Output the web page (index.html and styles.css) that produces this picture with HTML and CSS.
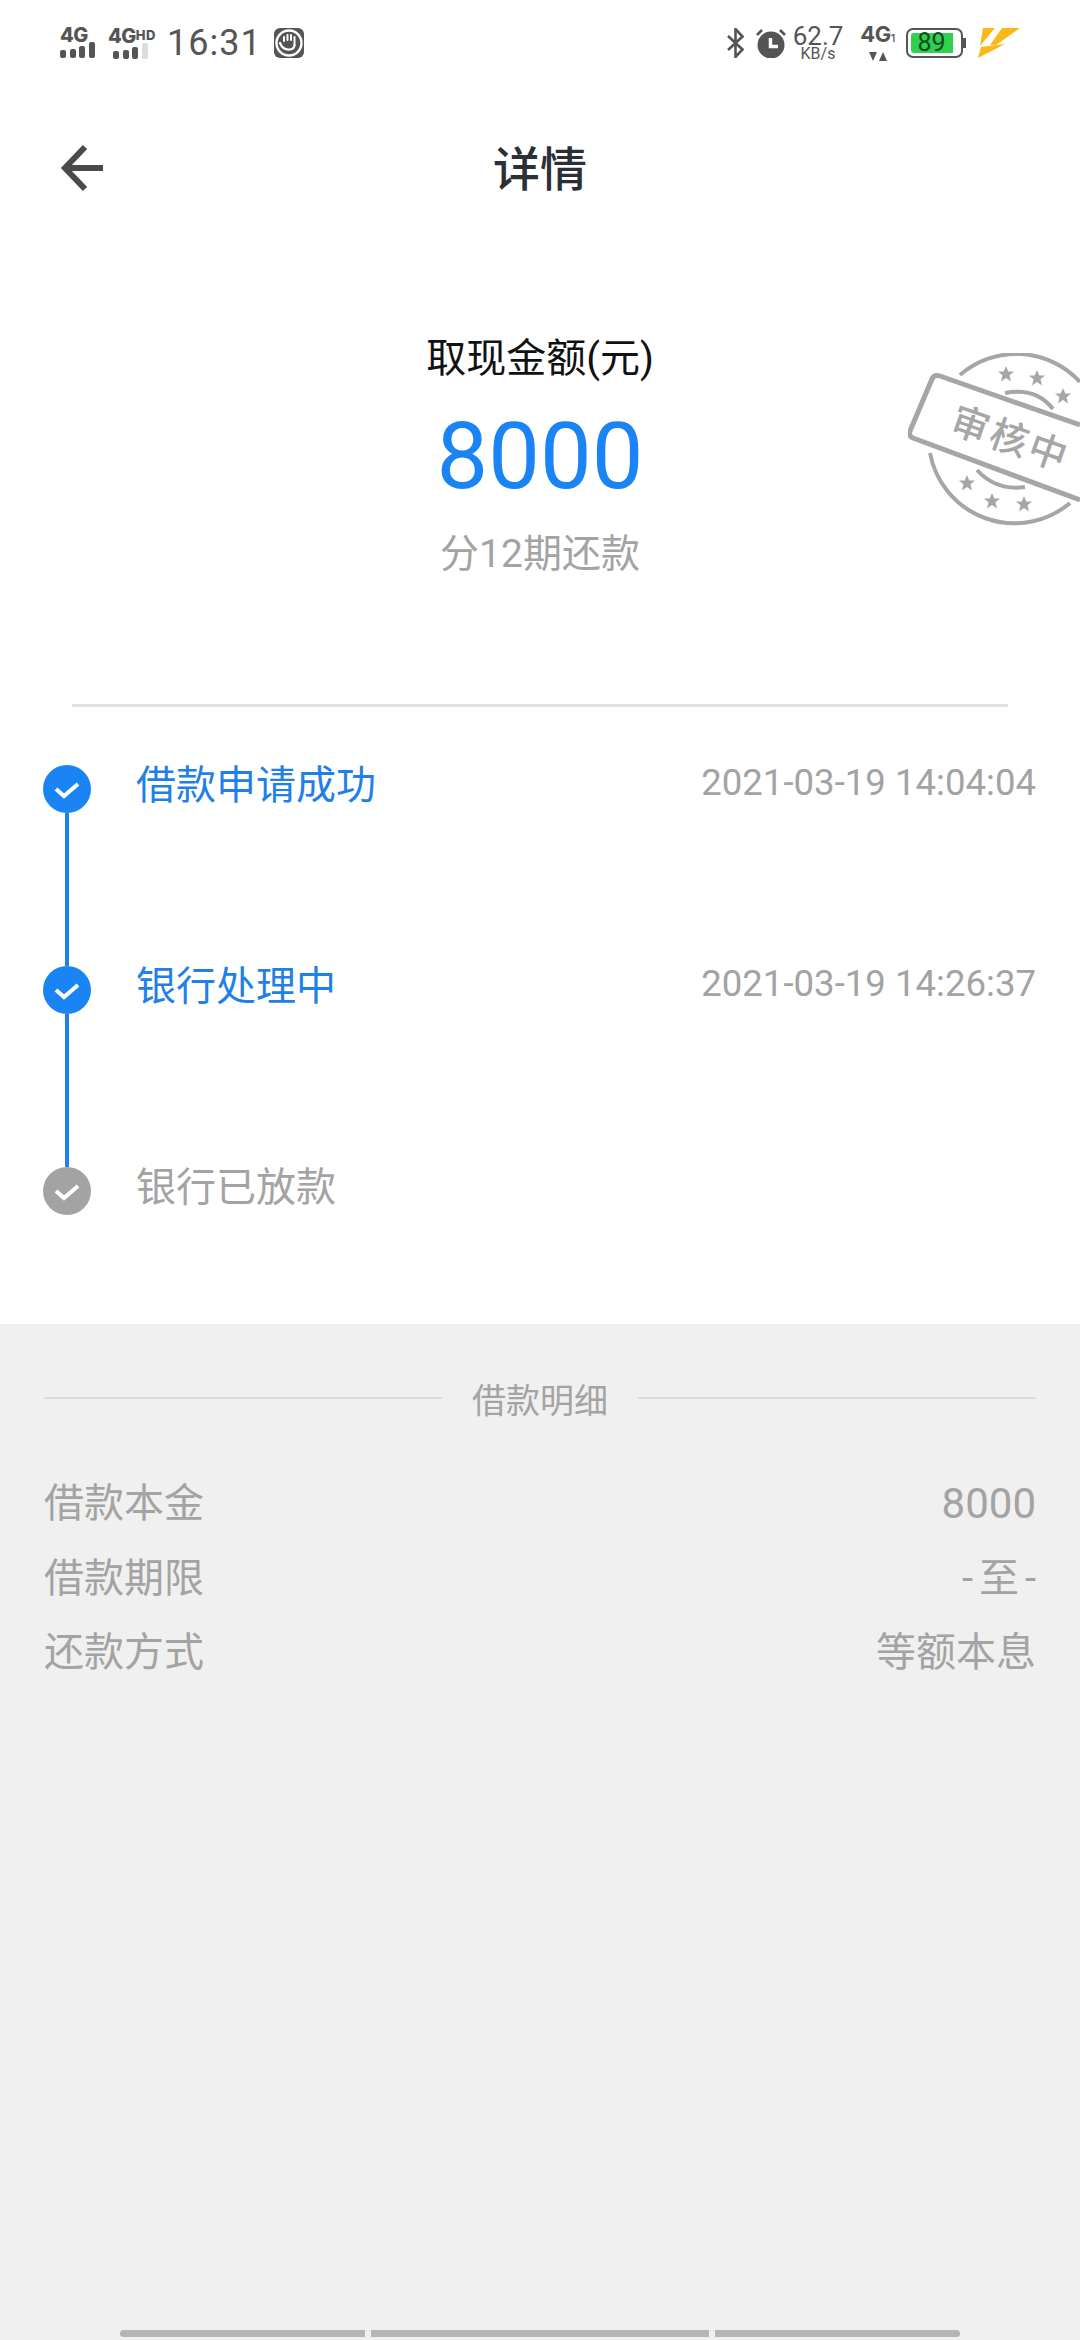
FILE: index.html
```html
<!DOCTYPE html>
<html lang="zh-CN">
<head>
  <meta charset="UTF-8" />
  <meta name="viewport" content="width=device-width, initial-scale=1.0"/>
  <title>详情</title>
  <link rel="stylesheet" href="styles.css">
</head>
<body>

<div class="status-bar">
  <div class="status-left">
    <div class="net">
      <span class="net-label">4G</span>
      <div class="bars">
        <i class="b1"></i><i class="b2"></i><i class="b3"></i><i class="b4"></i>
      </div>
    </div>
    <div class="net net-hd">
      <span class="net-label">4G<small>HD</small></span>
      <div class="bars">
        <i class="b1"></i><i class="b2"></i><i class="b3"></i><i class="b4 off"></i>
      </div>
    </div>
    <span class="clock">16:31</span>
    <svg class="hand-icon" width="30" height="30" viewBox="0 0 30 30">
      <rect width="30" height="30" rx="6" fill="#555"/>
      <circle cx="15" cy="15" r="12.500" fill="none" stroke="#fff" stroke-width="2.400"/>
      <path d="M10 13V9M13.500 12V7M17 12V7M20.500 13V9M20.500 12v5" fill="none" stroke="#fff" stroke-width="2" stroke-linecap="round"/>
      <path d="M6 15c2 5 6 7 10 6.500 3-.5 4.500-2.500 4.500-4.500" fill="none" stroke="#fff" stroke-width="2.200" stroke-linecap="round"/>
    </svg>
  </div>
  <div class="status-right">
    <svg width="18" height="30" viewBox="0 0 18 30">
      <path d="M2 8l14.500 13.500-7 7.500V1l7 7.500L2 22" fill="none" stroke="#555" stroke-width="2.600"/>
    </svg>
    <svg class="alarm" width="30" height="30" viewBox="0 0 30 30">
      <circle cx="15" cy="17" r="13.500" fill="#555"/>
      <path d="M1 7l5-5M29 7l-5-5" stroke="#555" stroke-width="2.600"/>
      <path d="M14.500 10v8.500H22" fill="none" stroke="#fff" stroke-width="3.500"/>
    </svg>
    <div class="speed">
      <span class="speed-num">62.7</span>
      <span class="speed-unit">KB/s</span>
    </div>
    <div class="sim">
      <span class="sim-label">4G<small>1</small></span>
      <svg width="18" height="9" viewBox="0 0 18 9">
        <path d="M0 0h8L4 9zM10 9l4-9 4 9z" fill="#555"/>
      </svg>
    </div>
    <div class="battery">
      <div class="battery-body"><span class="battery-level">89</span></div>
      <div class="battery-tip"></div>
    </div>
    <svg class="bolt" width="42" height="30" viewBox="0 0 42 30">
      <path d="M5 0h12L2 18zM24 0h18L18 17h-6zM3 19l24-3L0 30z" fill="#fbb917"/>
    </svg>
  </div>
</div>

<div class="top-bar">
  <svg class="back" width="46" height="48" viewBox="0 0 46 48">
    <path d="M43 24H5M25 3L5 24l20 21" fill="none" stroke="#4a4a4a" stroke-width="6"/>
  </svg>
  <h1 class="page-title">详情</h1>
</div>

<div class="amount-box">
  <div class="amount-label">取现金额(元)</div>
  <div class="amount-num">8000</div>
  <div class="amount-sub">分12期还款</div>
  <svg class="stamp" width="172" height="180" viewBox="0 0 172 180">
    <defs>
      <polygon id="star" points="0,-8 2.300,-2.500 8,-2.500 3.500,1.200 5,7.500 0,4 -5,7.500 -3.500,1.200 -8,-2.500 -2.300,-2.500"/>
    </defs>
    <g fill="none" stroke="#a6a6a6" stroke-width="4">
      <path d="M52 22A86 86 0 0 1 172 29"/>
      <path d="M22 100A86 86 0 0 0 162 150"/>
      <path d="M97 40Q128 34 145 56"/>
      <path d="M69 117Q88 138 117 134"/>
      <path d="M172 72L32 23Q26 21 24 26L2 78Q0 83 5 85L172 147" stroke-width="5"/>
    </g>
    <g fill="#a6a6a6">
      <use href="#star" x="98" y="21"/>
      <use href="#star" x="129" y="25"/>
      <use href="#star" x="155" y="43"/>
      <use href="#star" x="59" y="130"/>
      <use href="#star" x="84" y="148"/>
      <use href="#star" x="116" y="151"/>
      <text x="40" y="78" class="stamp-text" transform="rotate(19.400 40 78)">审核中</text>
    </g>
  </svg>
</div>

<div class="divider"></div>

<div class="steps">
  <div class="step">
    <div class="step-mark">
      <svg class="tick" width="48" height="48" viewBox="0 0 48 48">
        <circle cx="24" cy="24" r="24" fill="#1a84f5"/>
        <path d="M13 24l8 7 14-12" fill="none" stroke="#fff" stroke-width="4"/>
      </svg>
      <div class="step-line"></div>
    </div>
    <div class="step-name">借款申请成功</div>
    <div class="step-time">2021-03-19 14:04:04</div>
  </div>
  <div class="step">
    <div class="step-mark">
      <svg class="tick" width="48" height="48" viewBox="0 0 48 48">
        <circle cx="24" cy="24" r="24" fill="#1a84f5"/>
        <path d="M13 24l8 7 14-12" fill="none" stroke="#fff" stroke-width="4"/>
      </svg>
      <div class="step-line"></div>
    </div>
    <div class="step-name">银行处理中</div>
    <div class="step-time">2021-03-19 14:26:37</div>
  </div>
  <div class="step step-last">
    <div class="step-mark">
      <svg class="tick" width="48" height="48" viewBox="0 0 48 48">
        <circle cx="24" cy="24" r="24" fill="#a3a3a3"/>
        <path d="M13 24l8 7 14-12" fill="none" stroke="#fff" stroke-width="4"/>
      </svg>
    </div>
    <div class="step-name step-todo">银行已放款</div>
  </div>
</div>

<div class="detail">
  <div class="detail-head">
    <div class="detail-rule"></div>
    <span class="detail-title">借款明细</span>
    <div class="detail-rule"></div>
  </div>
  <div class="detail-row"><span>借款本金</span><span class="num-val">8000</span></div>
  <div class="detail-row"><span>借款期限</span><span class="dash-val">-至-</span></div>
  <div class="detail-row"><span>还款方式</span><span>等额本息</span></div>

  <div class="nav-hint">
    <i class="seg-a"></i><i class="seg-b"></i><i class="seg-c"></i>
  </div>
</div>

</body>
</html>
```

FILE: styles.css
```css
* {
  box-sizing: border-box;
}
html, body {
  height: 100%;
}
body {
  margin: 0;
  width: 1080px;
  height: 2340px;
  overflow: hidden;
  display: flex;
  flex-direction: column;
  background: white;
  font-family: Roboto, "Noto Sans CJK SC", sans-serif;
  color: #333;
}

/* status bar */
.status-bar {
  height: 84px;
  padding: 2px 60px 0;
  display: flex;
  justify-content: space-between;
  align-items: center;
  color: #555;
  flex-shrink: 0;
}
.status-left, .status-right {
  display: flex;
  align-items: center;
}
.net {
  width: 48px;
  display: flex;
  flex-direction: column;
  height: 30px;
}
.net-hd {
  width: 59px;
}
.net-label {
  font-family: Inter, sans-serif;
  font-size: 20px;
  font-weight: 800;
  line-height: 14px;
  letter-spacing: -0.5px;
}
.net-label small {
  font-size: 13px;
  font-weight: 800;
  vertical-align: 3px;
  letter-spacing: 0.5px;
}
.bars {
  display: flex;
  align-items: flex-end;
  gap: 3.5px;
  height: 16px;
}
.bars i {
  width: 6px;
  background: #555;
  border-radius: 2px;
}
.net-hd .bars {
  padding-left: 5px;
}
.b1 { height: 8px; }
.b2 { height: 9px; }
.b3 { height: 12px; }
.b4 { height: 16px; }
.bars .off {
  background: #ddd;
}
.clock {
  font-size: 36px;
  line-height: 30px;
  margin-right: 12px;
  letter-spacing: 1px;
}
.status-right .alarm {
  margin: 0 7px 0 12px;
}
.speed {
  width: 50px;
  margin-right: 18px;
  display: flex;
  flex-direction: column;
  align-items: center;
}
.speed-num {
  font-size: 26px;
  line-height: 20px;
}
.speed-unit {
  font-size: 16px;
  line-height: 15px;
}
.sim {
  width: 33px;
  margin-right: 12px;
  display: flex;
  flex-direction: column;
  align-items: center;
  gap: 5px;
}
.sim-label {
  font-family: Inter, sans-serif;
  font-size: 22px;
  font-weight: 700;
  line-height: 17px;
  letter-spacing: -0.5px;
}
.sim-label small {
  font-size: 11px;
  font-weight: 500;
}
.battery {
  display: flex;
  align-items: center;
  margin-right: 12px;
}
.battery-body {
  width: 57px;
  height: 30px;
  border: 2.500px solid #555;
  border-radius: 7px;
  padding: 2.500px 0 2.500px 2.500px;
}
.battery-level {
  display: block;
  width: 42px;
  height: 20px;
  background: #2fd14f;
  border-radius: 3px 0 0 3px;
  font-size: 25px;
  line-height: 20px;
  text-align: center;
  color: #124a22;
}
.battery-tip {
  width: 3px;
  height: 10px;
  background: #555;
}

/* header */
.top-bar {
  height: 172px;
  padding: 0 0 4px 60px;
  position: relative;
  display: flex;
  align-items: center;
  flex-shrink: 0;
}
.page-title {
  position: absolute;
  left: 0;
  right: 0;
  margin: -6px 0 0;
  text-align: center;
  font-size: 47px;
  font-weight: 500;
  color: #2b2f36;
}

/* amount */
.amount-box {
  height: 448px;
  padding-top: 75px;
  position: relative;
  display: flex;
  flex-direction: column;
  align-items: center;
  flex-shrink: 0;
}
.amount-label {
  font-size: 40px;
  line-height: 56px;
  color: #111;
}
.amount-num {
  font-size: 92px;
  line-height: 108px;
  color: #1a84f5;
  margin-top: 16px;
}
.amount-sub {
  font-size: 39px;
  line-height: 56px;
  color: #a3a3a3;
  margin-top: 15px;
}
.stamp {
  position: absolute;
  right: 0;
  top: 97px;
}
.stamp-text {
  font-size: 38px;
  font-weight: 500;
  font-family: "Noto Sans CJK SC", sans-serif;
  letter-spacing: 3px;
}

.divider {
  height: 3px;
  margin: 0 72px;
  background: #e2e2e2;
  flex-shrink: 0;
}

/* steps */
.steps {
  padding: 58px 44px 0 43px;
  flex-shrink: 0;
}
.step {
  height: 201px;
  display: flex;
  align-items: flex-start;
}
.step-last {
  height: 157px;
}
.step-mark {
  width: 48px;
  height: 100%;
  margin-right: 45px;
  display: flex;
  flex-direction: column;
  align-items: center;
}
.tick {
  flex-shrink: 0;
}
.step-line {
  flex: 1;
  width: 4px;
  background: #1f80e8;
}
.step-name {
  flex: 1;
  font-size: 40px;
  line-height: 42px;
  color: #1f80e8;
}
.step-todo {
  color: #a3a3a3;
}
.step-time {
  font-size: 36.600px;
  line-height: 36px;
  color: #a3a3a3;
}

/* detail */
.detail {
  flex: 1;
  display: flex;
  flex-direction: column;
  background: #f0f0f0;
  padding: 48px 44px 3px;
}
.detail-head {
  display: flex;
  align-items: center;
  gap: 30px;
  height: 52px;
  margin-bottom: 52px;
  flex-shrink: 0;
}
.detail-rule {
  flex: 1;
  height: 2px;
  background: #dcdcdc;
}
.detail-title {
  font-size: 34px;
  color: #a3a3a3;
}
.detail-row {
  display: flex;
  justify-content: space-between;
  height: 74.500px;
  font-size: 40px;
  line-height: 56px;
  color: #a3a3a3;
  flex-shrink: 0;
}
.num-val {
  font-size: 42px;
}
.dash-val {
  letter-spacing: 6px;
  margin-right: -6px;
}

/* bottom hint */
.nav-hint {
  margin: auto 0 0 76px;
  display: flex;
  gap: 6px;
}
.nav-hint i {
  height: 7px;
  background: #b5b5b5;
}
.seg-a {
  width: 245px;
  border-radius: 4px 0 0 4px;
}
.seg-b {
  width: 338px;
}
.seg-c {
  width: 245px;
  border-radius: 0 4px 4px 0;
}
```
